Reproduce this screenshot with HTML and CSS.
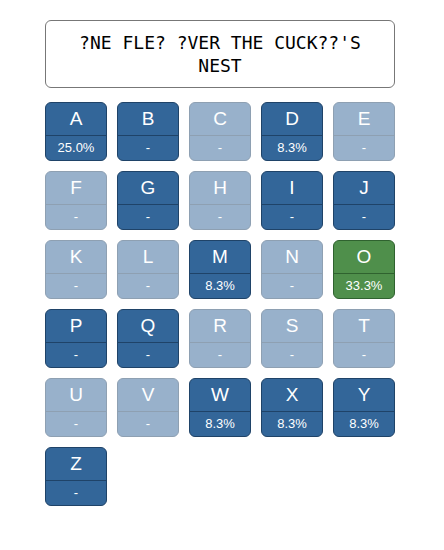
FILE: index.html
```
<!DOCTYPE html>
<html lang="en">
<head>
<meta charset="utf-8">
<title>Letter Guess</title>
<link rel="stylesheet" href="styles.css">
</head>
<body>
<main class="game">
<h1 class="phrase">?NE FLE? ?VER THE CUCK??'S NEST</h1>
<div class="keys">
<button class="key"><span class="letter">A</span><span class="chance">25.0%</span></button>
<button class="key"><span class="letter">B</span><span class="chance">-</span></button>
<button class="key" disabled><span class="letter">C</span><span class="chance">-</span></button>
<button class="key"><span class="letter">D</span><span class="chance">8.3%</span></button>
<button class="key" disabled><span class="letter">E</span><span class="chance">-</span></button>
<button class="key" disabled><span class="letter">F</span><span class="chance">-</span></button>
<button class="key"><span class="letter">G</span><span class="chance">-</span></button>
<button class="key" disabled><span class="letter">H</span><span class="chance">-</span></button>
<button class="key"><span class="letter">I</span><span class="chance">-</span></button>
<button class="key"><span class="letter">J</span><span class="chance">-</span></button>
<button class="key" disabled><span class="letter">K</span><span class="chance">-</span></button>
<button class="key" disabled><span class="letter">L</span><span class="chance">-</span></button>
<button class="key"><span class="letter">M</span><span class="chance">8.3%</span></button>
<button class="key" disabled><span class="letter">N</span><span class="chance">-</span></button>
<button class="key best"><span class="letter">O</span><span class="chance">33.3%</span></button>
<button class="key"><span class="letter">P</span><span class="chance">-</span></button>
<button class="key"><span class="letter">Q</span><span class="chance">-</span></button>
<button class="key" disabled><span class="letter">R</span><span class="chance">-</span></button>
<button class="key" disabled><span class="letter">S</span><span class="chance">-</span></button>
<button class="key" disabled><span class="letter">T</span><span class="chance">-</span></button>
<button class="key" disabled><span class="letter">U</span><span class="chance">-</span></button>
<button class="key" disabled><span class="letter">V</span><span class="chance">-</span></button>
<button class="key"><span class="letter">W</span><span class="chance">8.3%</span></button>
<button class="key"><span class="letter">X</span><span class="chance">8.3%</span></button>
<button class="key"><span class="letter">Y</span><span class="chance">8.3%</span></button>
<button class="key"><span class="letter">Z</span><span class="chance">-</span></button>
</div>
</main>
</body>
</html>
```
FILE: styles.css
```
* {
  box-sizing: border-box;
}

body {
  margin: 0;
  background: #fff;
  font-family: "Liberation Sans", Arial, sans-serif;
}

.game {
  max-width: 390px;
  margin: 0 auto;
  padding: 20px 22px 20px 18px;
}

.phrase {
  margin: 0 0 14px;
  padding: 10px;
  border: 1px solid #777;
  border-radius: 6px;
  font: 18px/23px "DejaVu Sans Mono", monospace;
  text-align: center;
}

.keys {
  display: grid;
  grid-template-columns: repeat(5, 1fr);
  gap: 10px;
}

.key {
  display: flex;
  flex-direction: column;
  padding: 0;
  overflow: hidden;
  border: 1px solid #1f4368;
  border-radius: 6px;
  background: #336699;
  color: #fff;
  font-family: inherit;
}

.key:disabled {
  opacity: 0.5;
}

.best {
  border-color: #2f622f;
  background: #4f8f4b;
}

.letter,
.chance {
  width: 100%;
  text-align: center;
}

.letter {
  border-bottom: 1px solid #1f4368;
  font-size: 19px;
  line-height: 32px;
}

.best .letter {
  border-color: #2f622f;
}

.chance {
  font-size: 13px;
  line-height: 24px;
}
```
